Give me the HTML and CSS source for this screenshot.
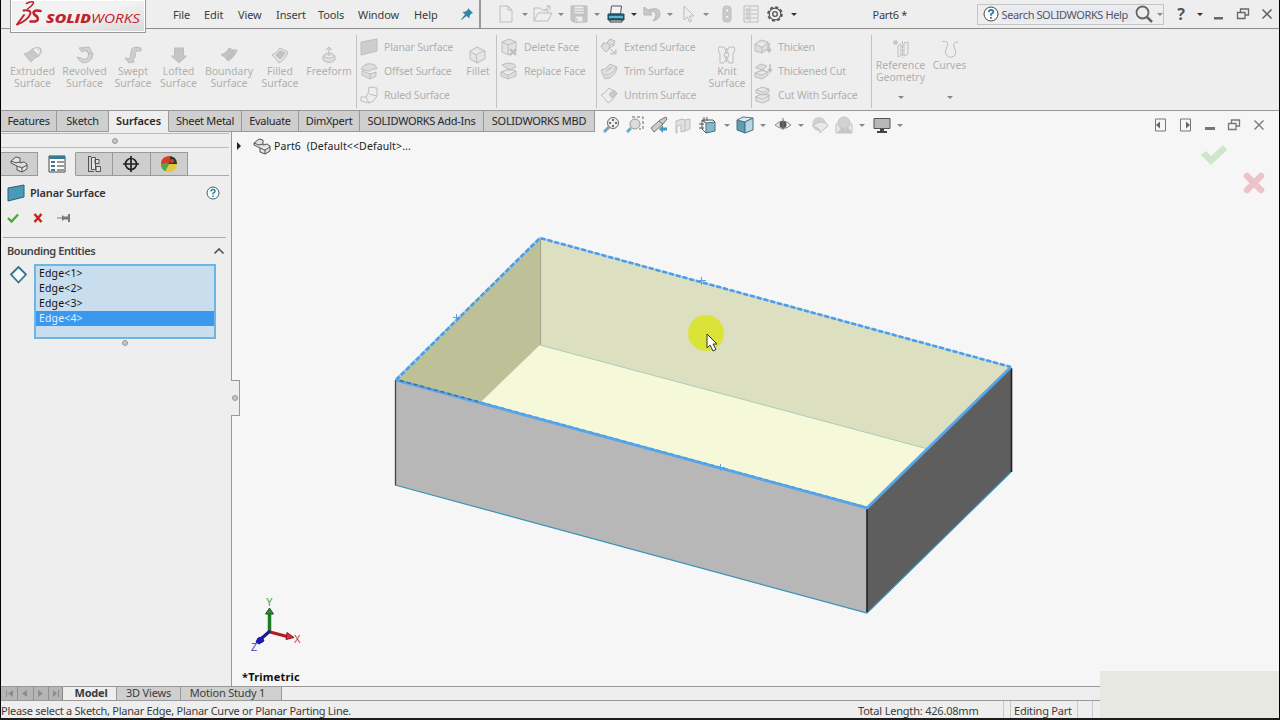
FILE: index.html
```html
<!doctype html>
<html lang="en">
    <head>
        <meta charset="UTF-8" />
        <title>SOLIDWORKS - Part6</title>
        <link rel="stylesheet" href="styles.css">
    </head>
    <body>
        <div class="app">
            <!-- Menu bar -->
            <div class="menubar">
                <div class="logo">
                    <svg width="131" height="30" viewBox="12 0 131 30">
                        <g fill="none" stroke="#c3212b" stroke-linecap="round" stroke-linejoin="round">
                            <path stroke-width="1.500" d="M26.500 3.500Q30 1.200 33 1.800 35 3.500 27.500 9" />
                            <path stroke-width="2" d="M23.500 10.500Q31 9.500 30.500 13.500 28 20.500 17 24.500L24 15" />
                            <path stroke-width="2.600" d="M40.500 11Q34.500 9.500 33.500 12.500 33.500 14.500 37 16.500 39.500 20.500 35 21.500L30.500 21.500" />
                        </g>
                        <text class="logo-bold" x="46" y="23" textLength="45" lengthAdjust="spacingAndGlyphs">SOLID</text>
                        <text class="logo-light" x="91" y="23" textLength="49" lengthAdjust="spacingAndGlyphs">WORKS</text>
                    </svg>
                </div>
                <div class="menus">
                    <span>File</span>
                    <span>Edit</span>
                    <span>View</span>
                    <span>Insert</span>
                    <span>Tools</span>
                    <span>Window</span>
                    <span>Help</span>
                    <svg class="pin" width="14" height="14" viewBox="0 0 14 14">
                        <path fill="#2d87a5" d="M8 1 L13 6 L11.500 6.500 L9.500 9 L9.500 11.500 L6.500 9 L1.500 13 L1 12.500 L5 7.500 L2.500 5 L5.500 4.500 L8 2.500Z" />
                    </svg>
                </div>
                <div class="quickbar">
                    <svg width="18" height="20" viewBox="0 0 18 20" class="faded"><path d="M3 2h8l4 4v12H3zM11 2v4h4" /></svg>
                    <i class="arrow mid"></i>
                    <svg width="20" height="20" viewBox="0 0 20 20" class="faded"><path d="M1 17V4h6l2 2h6v3M1 17l4-8h14l-4 8zM11 7l6-5m-4 0h4v4" /></svg>
                    <i class="arrow mid"></i>
                    <svg width="18" height="20" viewBox="0 0 18 20" class="faded"><path fill="#c5c5c5" d="M1 2h16v16H3l-2-2z" /><path fill="#eee" d="M4 2h10v8H4zM5 12h8v6H5z" /><path d="M5 5h8M5 7.500h8M7 14v4" /></svg>
                    <i class="arrow mid"></i>
                    <svg width="18" height="18" viewBox="0 0 18 18">
                        <path fill="#f3f3f3" stroke="#555" d="M4.500 1h10l-1 8h-10z" />
                        <path fill="#21677d" stroke="#164858" d="M1 9h16v6H1z" />
                        <path stroke="#71d0e4" stroke-width="1.500" d="M2 12h14" />
                        <path fill="#eee" stroke="#333" d="M3 15h12v2H3z" />
                    </svg>
                    <i class="arrow dark"></i>
                    <svg width="18" height="18" viewBox="0 0 18 18"><path fill="#c9c9c9" stroke="#b4b4b4" d="M1 2v8h8L6.500 7.500Q13 5 13 10q0 3-3 6 7-2 7-7Q17 1 5 5z" /></svg>
                    <i class="arrow mid"></i>
                    <svg width="16" height="20" viewBox="0 0 16 20" class="faded"><path d="M4 2v14l3.500-3 2 5 2-1-2-5H14z" /></svg>
                    <i class="arrow mid"></i>
                    <svg width="12" height="20" viewBox="0 0 12 20" class="faded"><rect x="2" y="2" width="8" height="16" rx="3" fill="#ccc" /><circle cx="6" cy="6.500" r="2" fill="#eee" /><circle cx="6" cy="13" r="2" fill="#eee" /></svg>
                    <svg width="16" height="18" viewBox="0 0 16 18" class="faded"><path d="M1 1h14v16H1zM3 4h3v2H3zM3 8h3v2H3zM3 12h3v2H3zM8 5h6M8 9h6M8 13h6M7 1v16" /></svg>
                    <svg width="18" height="18" viewBox="0 0 18 18" fill="none" stroke="#555">
                        <circle cx="9" cy="9" r="7" stroke-width="1.600" stroke-dasharray="3.100 2.400" />
                        <circle cx="9" cy="9" r="5.800" stroke-width="1.200" />
                        <circle cx="9" cy="9" r="2.300" stroke-width="1.300" />
                    </svg>
                    <i class="arrow dark"></i>
                </div>
                <div class="doc-title">Part6 *</div>
                <div class="search">
                    <svg width="16" height="16" viewBox="0 0 16 16">
                        <circle cx="8" cy="8" r="7" fill="#fff" stroke="#444" />
                        <path fill="none" stroke="#2383a6" stroke-width="1.800" d="M5.700 6.200Q6 4 8 4q2.500 0 2.300 2Q10 7.500 8 8v1.700M8 11v1.700" />
                    </svg>
                    <span>Search SOLIDWORKS Help</span>
                    <svg width="18" height="18" viewBox="0 0 18 18" fill="none" stroke="#666"><circle cx="7.500" cy="7.500" r="6" stroke-width="1.800" /><path stroke-width="2.500" d="M12 12l5 5" /></svg>
                    <i class="arrow mid"></i>
                </div>
                <div class="winbar">
                    <b>?</b>
                    <i class="arrow dark"></i>
                    <svg width="12" height="12" viewBox="0 0 12 12"><path fill="#666" d="M1 9h9v2.500H1z" /></svg>
                    <svg width="14" height="12" viewBox="0 0 14 12" fill="none" stroke="#666" stroke-width="1.300"><path d="M4.500 4V1h8v6H9M1.500 4.500H9v6H1.500z" /></svg>
                    <svg width="12" height="12" viewBox="0 0 12 12"><path stroke="#666" stroke-width="1.600" d="M1.500 1.500l9 9m0-9l-9 9" /></svg>
                </div>
            </div>

            <!-- Surfaces ribbon -->
            <div class="ribbon">
                <div class="group bigs">
                    <div class="big">
                        <svg width="20" height="18" viewBox="0 0 20 18" class="ghost"><path fill="#c9c9c9" d="M1 8q5-1 8-5l7 7q-4 1-8 6z" /><path d="M9 3l6-2 3 2-2 7M14 3h4v5" /></svg>
                        <span>Extruded<br>Surface</span>
                    </div>
                    <div class="big">
                        <svg width="18" height="18" viewBox="0 0 18 18" class="ghost"><path fill="#d2d2d2" d="M3 2l10-1 4 7q-1 8-9 9-5-1-7-6l4 1q4 3 7-1 2-4-1-7L6 6z" /><path d="M7 2l6 6 4-1" /></svg>
                        <span>Revolved<br>Surface</span>
                    </div>
                    <div class="big">
                        <svg width="18" height="18" viewBox="0 0 18 18" class="ghost"><path fill="#cecece" d="M17 2q-10-3-10 4 0 5-2 7L1 12l4 5 5-1-1-2q4-4 2-7 1-3 6-2z" /></svg>
                        <span>Swept<br>Surface</span>
                    </div>
                    <div class="big">
                        <svg width="18" height="18" viewBox="0 0 18 18" class="ghost"><path fill="#c5c5c5" d="M4.500 2h9v8h3l-7.500 7-7.500-7h3z" /></svg>
                        <span>Lofted<br>Surface</span>
                    </div>
                    <div class="big">
                        <svg width="18" height="18" viewBox="0 0 18 18" class="ghost"><path fill="#c3c3c3" d="M1 9q6-2 8-7 4 3 8 2-3 8-9 11-3-5-7-6z" /><path d="M5 7l7 5M9 4l5 4M7 13l6-9" /></svg>
                        <span>Boundary<br>Surface</span>
                    </div>
                    <div class="big">
                        <svg width="18" height="18" viewBox="0 0 18 18" class="ghost"><path fill="#e2e2e2" d="M1 9q5-2 8-7l8 4q-3 8-9 11-3-5-7-8z" /><path fill="#c2c2c2" d="M5 9l4-4 5 2-5 6z" /></svg>
                        <span>Filled<br>Surface</span>
                    </div>
                    <div class="big">
                        <svg width="18" height="18" viewBox="0 0 18 18" class="ghost"><path fill="#dedede" d="M3 10q2-3 6-3t6 3v4q-6 5-12 0zM3 10q6 4 12 0M9 10V1M6 4l3-3 3 3" /></svg>
                        <span>Freeform</span>
                    </div>
                </div>

                <div class="group offsets">
                    <div class="rows">
                        <div><svg width="18" height="18" viewBox="0 0 18 18" class="ghost"><path fill="#cecec9" d="M1 4l16-3v12L1 17z" /></svg>Planar Surface</div>
                        <div><svg width="18" height="18" viewBox="0 0 18 18" class="ghost"><path fill="#ddd" d="M1 7q5-8 14-4l2 4q-4-1-7 2-5 0-9-2zM2 9v4l8 4 6-3v-4l-6 2zM10 12v5" /></svg>Offset Surface</div>
                        <div><svg width="18" height="18" viewBox="0 0 18 18" class="ghost"><path d="M9 1l8 1v8q-3 6-8 7l-8-2v-4h5q3-3 3-10zM9 8l8 2M6 11l3 6" /></svg>Ruled Surface</div>
                    </div>
                    <div class="big">
                        <svg width="18" height="18" viewBox="0 0 18 18" class="ghost"><path fill="#e5e5e5" d="M1 5l7-4 8 4v8l-8 4-7-4zM1 5l6 4q1-2 9-4M7 9l1 8" /></svg>
                        <span>Fillet</span>
                    </div>
                </div>

                <div class="group faces">
                    <div class="rows">
                        <div><svg width="18" height="18" viewBox="0 0 18 18" class="ghost"><path fill="#e3e3e3" d="M2 4l7-3 7 3v10l-7 3-7-3zM2 4l6 3v10M8 7l8-3" /><path stroke-width="2" d="M10 11l6 6m0-6l-6 6" /></svg>Delete Face</div>
                        <div><svg width="18" height="18" viewBox="0 0 18 18" class="ghost"><path fill="#ddd" d="M2 3l5-2 7 1 2 3-7 3zM1 10l8-3 7 2v5l-8 3-7-3zM1 10l7 3 8-4M8 13v4" /></svg>Replace Face</div>
                    </div>
                </div>

                <div class="group trims">
                    <div class="rows">
                        <div><svg width="18" height="18" viewBox="0 0 18 18" class="ghost"><path fill="#dedede" d="M1 9q1-4 6-4l3-4 5 2-1 3q-5 0-5 5l-3 3zM9 11q2-3 6-4M9 10l6 5M16 11v5h-6" /><path d="M1 9l3-5M10 1L7 5l4 3" /></svg>Extend Surface</div>
                        <div><svg width="18" height="18" viewBox="0 0 18 18" class="ghost"><path fill="#ddd" d="M1 8q6-1 9-6l7 3q-1 8-8 11l-4 1-2-4zM5 13q8-1 11-8M6 9l6-4" /></svg>Trim Surface</div>
                        <div><svg width="18" height="18" viewBox="0 0 18 18" class="ghost"><path d="M1 9q5-2 8-7l8 5q-3 7-9 10-3-5-7-8z" /><path fill="#c9c9c9" d="M9 8l5-4 3 4-5 4z" /></svg>Untrim Surface</div>
                    </div>
                    <div class="big">
                        <svg width="18" height="18" viewBox="0 0 18 18" class="ghost"><path d="M1 1h5l2 4-2 4 2 4-2 4H2V8L0 4zM16 1h-5L9 5l2 4-2 4 2 4h4V8l2-4z" /><path stroke-dasharray="2 2" d="M8.500 2v15" /></svg>
                        <span>Knit<br>Surface</span>
                    </div>
                </div>

                <div class="group thick">
                    <div class="rows">
                        <div><svg width="18" height="18" viewBox="0 0 18 18" class="ghost"><path fill="#ddd" d="M1 6l6-4 7 2v7l-6 4-7-2zM1 6l7 3 6-5M8 9v6" /><path stroke-width="1.500" d="M15 5v9m-2-3l2 3 2-3" /></svg>Thicken</div>
                        <div><svg width="18" height="18" viewBox="0 0 18 18" class="ghost"><path fill="#ddd" d="M2 5l5-3 6 2-4 4-7-2zM1 11l7-3 6 2v3l-6 4-7-2zM1 11l7 2 6-3" /><path stroke-width="1.500" d="M16 2v8m-2-3l2 3 2-3" /></svg>Thickened Cut</div>
                        <div><svg width="18" height="18" viewBox="0 0 18 18" class="ghost"><path fill="#e1e1e1" d="M2 4l6-3 7 2v3L9 9 2 7zM2 4l7 2 6-3M1 11l7-3 8 1-7 4zM2 11v4l7 2 6-3v-4" /></svg>Cut With Surface</div>
                    </div>
                </div>

                <div class="group refs">
                    <div class="big">
                        <svg width="18" height="18" viewBox="0 0 18 18" class="ghost"><path fill="#ccc" d="M2 1h3v3H2z" /><path d="M6 6l3-2v11l-3 2zM12 3l4-1v12l-4 2z" /><path stroke-dasharray="3 1" d="M10.500 1v17" /></svg>
                        <span>Reference<br>Geometry</span>
                        <i class="arrow mid"></i>
                    </div>
                    <div class="big">
                        <svg width="18" height="18" viewBox="0 0 18 18" class="ghost"><path d="M1.500 1.500q6-1 5 4-5 9 2 11.500h2q6-1 3.500-8-4-7 3-7" /></svg>
                        <span>Curves</span>
                        <i class="arrow mid"></i>
                    </div>
                </div>
            </div>

            <!-- Command tabs and heads-up toolbar -->
            <div class="tabrow">
                <div class="tabs">
                    <div class="tab">Features</div>
                    <div class="tab">Sketch</div>
                    <div class="tab active">Surfaces</div>
                    <div class="tab">Sheet Metal</div>
                    <div class="tab">Evaluate</div>
                    <div class="tab">DimXpert</div>
                    <div class="tab">SOLIDWORKS Add-Ins</div>
                    <div class="tab">SOLIDWORKS MBD</div>
                </div>
                <div class="hud">
                    <svg width="18" height="18" viewBox="0 0 18 18"><path stroke="#6caac0" stroke-width="3" d="M2 16l5-5" /><circle cx="11" cy="7" r="5.500" fill="#eee" stroke="#666" /><path stroke="#444" stroke-width="1.500" d="M11 3v2M11 9v2M7 7h2M13 7h2" /></svg>
                    <svg width="18" height="18" viewBox="0 0 18 18"><path stroke="#6caac0" stroke-width="3" d="M1 16l4-4" /><circle cx="9" cy="8" r="5" fill="#ddd" stroke="#999" /><path fill="none" stroke="#666" stroke-dasharray="3 2" d="M6 1h11v12h-4" /></svg>
                    <svg width="18" height="18" viewBox="0 0 18 18"><path fill="#ccc" stroke="#777" d="M1 12l9-8 6-3 1 2-4 5-9 8zM9 5l4 3" /><path fill="#4199bb" d="M9 13l4-4v2.500h4v3h-4V17z" /></svg>
                    <svg width="18" height="18" viewBox="0 0 18 18" class="ghost"><path fill="#e1e1e1" d="M2 5l6-2 3 1v11l-4 1v-7l-4 1v7H2zM11 4l5-1v10l-5 2" /></svg>
                    <svg width="18" height="18" viewBox="0 0 18 18"><path fill="#86b9ce" stroke="#48717f" d="M7 7l9-1v9l-9 2z" /><path fill="none" stroke="#555" d="M7 7L3 4h11l2 2M3 4v9l4 4M5 1v5M8 1v4M0 8h5M0 12h5" /></svg>
                    <i class="arrow mid"></i>
                    <svg width="18" height="18" viewBox="0 0 18 18"><path fill="#5f9db6" stroke="#48717f" d="M1 4l8 2v11l-8-3z" /><path fill="#d9ebef" stroke="#557783" d="M1 4l6-3 10 1-8 4z" /><path fill="#b5d6e2" stroke="#48717f" d="M9 6l8-4v12l-8 3z" /></svg>
                    <i class="arrow mid"></i>
                    <svg width="18" height="18" viewBox="0 0 18 18"><path fill="#eee" stroke="#888" d="M1 9q8-8 16 0-8 7-16 0z" /><circle cx="9" cy="8.500" r="3.500" fill="#555" /><path stroke="#777" d="M9 2v12" /></svg>
                    <i class="arrow mid"></i>
                    <svg width="18" height="18" viewBox="0 0 18 18"><circle cx="8" cy="8" r="7" fill="#d2d2d2" /><path fill="#e9e9e9" stroke="#c0c0c0" d="M2 10q6-6 13-3l2 3-5 4-3 3-1-4z" /></svg>
                    <svg width="18" height="18" viewBox="0 0 18 18"><path fill="#e8e8e8" stroke="#c2c2c2" d="M1 8h16v9H1z" /><circle cx="9" cy="7" r="6" fill="#d2d2d2" stroke="#c2c2c2" /><path fill="#c5c5c5" d="M2 17l5-6 3 3 3-3 4 6z" /></svg>
                    <i class="arrow mid"></i>
                    <svg width="18" height="18" viewBox="0 0 18 18"><path fill="#b4b8ba" stroke="#555" d="M1 2.500h16v10H1z" /><path fill="#444" d="M7 13h4v2h3v2H4v-2h3z" /></svg>
                    <i class="arrow mid"></i>
                </div>
                <div class="viewctl">
                    <svg width="14" height="14" viewBox="0 0 14 14"><path fill="none" stroke="#777" d="M1.500 1h10v12h-10z" /><path fill="#666" d="M2 7l4-3.500v7z" /></svg>
                    <svg width="14" height="14" viewBox="0 0 14 14"><path fill="none" stroke="#777" d="M1.500 1h10v12h-10z" /><path fill="#666" d="M11 7L7 3.500v7z" /></svg>
                    <svg width="12" height="12" viewBox="0 0 12 12"><path fill="#777" d="M1 8h10v3H1z" /></svg>
                    <svg width="14" height="12" viewBox="0 0 14 12" fill="none" stroke="#777" stroke-width="1.300"><path d="M4.500 4V1h8v6H9M1.500 4.500H9v6H1.500z" /></svg>
                    <svg width="12" height="12" viewBox="0 0 12 12"><path stroke="#777" stroke-width="1.300" d="M1.500 1.500l9 9m0-9l-9 9" /></svg>
                </div>
            </div>

            <div class="main">
                <!-- Property manager -->
                <div class="panel">
                    <div class="grip"><i class="dot"></i></div>
                    <div class="panel-tabs">
                        <div><svg width="18" height="18" viewBox="0 0 18 18" class="line"><path fill="#e5e5e5" d="M1 6l5-4 4 1v5l4-1 3 2v5l-5 3-5-2v-4l-6-3zM1 6l5 2 4-1M7 11l5 2 5-3M12 13v4" /></svg></div>
                        <div class="active"><svg width="18" height="18" viewBox="0 0 18 18"><path fill="#fff" stroke="#444" d="M1 1h16v16H1z" /><path fill="#367b96" d="M1 1h16v3H1zM3 6h4v2H3zM3 10h4v2H3zM3 14h4v2H3z" /><path stroke="#333" d="M9 7h7M9 11h7M9 15h7" /></svg></div>
                        <div><svg width="18" height="18" viewBox="0 0 18 18" class="line"><path fill="#e5e5e5" d="M3.500 1v15.500M3 1.500h3M3 16.500h6M6.500 2.500h4v12h-4zM10 4.500h4v4h-4zM11 11.500h4.500v5H11z" /></svg></div>
                        <div><svg width="18" height="18" viewBox="0 0 18 18" fill="none" stroke="#222" stroke-width="1.700"><circle cx="9" cy="9" r="5.500" /><path d="M9 1v16M1 9h16" /></svg></div>
                        <div><svg width="18" height="18" viewBox="0 0 18 18"><circle cx="9" cy="9" r="8" fill="#e2c83a" /><path fill="#d83a2c" d="M9 9L1 8Q2 1 10 1z" /><path fill="#333" d="M9 9l1-8q7 1 7 8z" /><path fill="#3171b7" d="M9 9L1 8q0 5 4 8z" /><path fill="#50a943" d="M9 9H1q0 5 4 7z" /><circle cx="12" cy="6" r="2" fill="#c74537" /></svg></div>
                    </div>
                    <div class="panel-title">
                        <svg width="18" height="18" viewBox="0 0 18 18"><path fill="#4b9ab7" stroke="#286176" d="M1 4l16-3v12L1 17z" /></svg>
                        <span>Planar Surface</span>
                        <svg width="14" height="14" viewBox="0 0 14 14"><circle cx="7" cy="7" r="6" fill="#fff" stroke="#4a5a60" /><path fill="none" stroke="#2383a6" stroke-width="1.500" d="M5 5.500Q5 3.500 7 3.500t2 2Q9 6.500 7 7.200v1.300M7 9.500V11" /></svg>
                    </div>
                    <div class="actions">
                        <svg width="12" height="12" viewBox="0 0 12 12"><path fill="none" stroke="#45ad2a" stroke-width="2.300" d="M1 6l3.500 3.500L11 2.500" /></svg>
                        <svg width="10" height="10" viewBox="0 0 10 10"><path stroke="#cc2018" stroke-width="2.500" d="M1.500 1l7 8m0-8l-7 8" /></svg>
                        <svg width="14" height="10" viewBox="0 0 14 10"><path fill="#777" d="M0 4.500h5V2l2 1.500h4V1h2v8h-2V6.500H7L5 8V5.500H0z" /></svg>
                    </div>
                    <div class="section">
                        <div class="section-header">
                            <span>Bounding Entities</span>
                            <svg width="12" height="8" viewBox="0 0 12 8"><path fill="none" stroke="#555" stroke-width="1.700" d="M1.500 6.500L6 2l4.500 4.500" /></svg>
                        </div>
                        <div class="selection">
                            <svg width="18" height="18" viewBox="0 0 18 18"><path fill="#f6fbfd" stroke="#34728e" stroke-width="1.800" stroke-linejoin="round" d="M9.500 1L17 8.500l-7.500 8L2 8.500z" /></svg>
                            <div class="listbox">
                                <div>Edge&lt;1&gt;</div>
                                <div>Edge&lt;2&gt;</div>
                                <div>Edge&lt;3&gt;</div>
                                <div class="selected">Edge&lt;4&gt;</div>
                            </div>
                        </div>
                        <div class="resize"><i class="dot"></i></div>
                    </div>
                    <div class="flyout"><i class="dot"></i></div>
                </div>

                <!-- Graphics area -->
                <div class="viewport">
                    <div class="tree">
                        <i class="expand"></i>
                        <svg width="18" height="18" viewBox="0 0 18 18" class="line"><path fill="#e0e0e0" d="M1 6l5-4 4 1v5l4-1 3 2v5l-5 3-5-2v-4l-6-3zM1 6l5 2 4-1M7 11l5 2 5-3M12 13v4" /></svg>
                        <span>Part6  (Default&lt;&lt;Default&gt;...</span>
                    </div>
                    <svg class="scene" width="1047" height="555" viewBox="232 131 1047 555">
                        <polygon points="540,238 396,380 481,402 540,345" fill="#bec097" />
                        <polygon points="540,238 1011,367 928,449 540,345" fill="#dde0c0" />
                        <polygon points="540,345 928,449 867,508 481,402" fill="#f5f8d9" />
                        <polygon points="395,380 867,508 867,613 395,485" fill="#b7b7b7" />
                        <polygon points="867,508 1011,367 1011,472 867,613" fill="#5d5e5d" />
                        <path fill="none" stroke="#9da28a" d="M540.500 239v106" />
                        <path fill="none" stroke="#a6cbbb" d="M540 345l388 104" />
                        <path fill="none" stroke="#3593b5" stroke-width="1.200" d="M395 485l472 128 144-141" />
                        <path fill="none" stroke="#444" stroke-width="1.300" d="M395.500 380v105" />
                        <path fill="none" stroke="#222" stroke-width="1.600" d="M867 509v103M1011.500 368v104" />
                        <!-- selected edges -->
                        <path fill="none" stroke="#58a5e9" stroke-width="1.200" d="M396 379L540 237.500" />
                        <path fill="none" stroke="#a9cfec" stroke-width="1.800" d="M396 380L540 238l471 129" />
                        <path fill="none" stroke="#4b9ee6" stroke-width="2.600" stroke-dasharray="5 2" d="M396 380L540 238l471 129" />
                        <path fill="none" stroke="#58a5e9" stroke-width="2.900" d="M396 380l471 128 144-141" />
                        <path fill="none" stroke="#43697d" stroke-width="1.300" stroke-dasharray="4 3" d="M400 380.500l80 21.500" />
                        <path fill="none" stroke="#4a9ade" stroke-width="1" stroke-dasharray="4 3" d="M481 402l386 105" />
                        <path stroke="#56a3e1" d="M453 317.500h8M456.500 314v8M698 280.500h8M701.500 277v8M717 467.500h8M720.500 464v7" />
                        <!-- pointer -->
                        <circle cx="706" cy="333" r="18" fill="#dce338" />
                        <path fill="#fff" stroke="#333" d="M707 334v14l3-3 3 6 3-1.500-3-5.500h4z" />
                        <!-- triad -->
                        <path stroke="#207a24" stroke-width="3.500" d="M269.500 631v-18" />
                        <path fill="#2c8c31" stroke="#175c1c" d="M265.500 614l4-6 4 6z" />
                        <path stroke="#b71823" stroke-width="3" d="M270 632l19 5" />
                        <path fill="#d3313a" stroke="#8f1720" d="M287 632.500l7 5-8 2z" />
                        <path stroke="#171a90" stroke-width="3" d="M270 631l-8 7" />
                        <path fill="#2116bf" stroke="#1b168d" d="M258 638l4-1 2 4-5 3-3-2z" />
                        <text class="axis" x="266" y="606" fill="#42a344">Y</text>
                        <text class="axis" x="294" y="643" fill="#cf3546">X</text>
                        <text class="axis" x="251" y="651" fill="#403fc0">Z</text>
                    </svg>
                    <div class="confirm">
                        <svg width="28" height="22" viewBox="0 0 28 22"><path fill="#cfe6cc" d="M1 11l5-4 5 5L23 1l4 5-16 15z" /></svg>
                        <svg width="24" height="24" viewBox="0 0 24 24"><path stroke="#ecc3c7" stroke-width="6.500" stroke-linecap="round" d="M5 5l14 14m0-14L5 19" /></svg>
                    </div>
                    <div class="view-name">*Trimetric</div>
                </div>
            </div>

            <!-- Bottom tabs -->
            <div class="sheets">
                <div class="nav">
                    <svg width="61" height="13" viewBox="0 0 61 13"><path fill="none" stroke="#909090" d="M15.500 0v13M31.500 0v13M46.500 0v13M4.500 3v7" /><path fill="#8c8c8c" d="M11 3v7L6 6.500zM25 3v7l-5-3.500zM36 3v7l5-3.500zM51 3v7l4-3.500zM56 3h1v7h-1z" /></svg>
                </div>
                <div class="sheet active">Model</div>
                <div class="sheet">3D Views</div>
                <div class="sheet">Motion Study 1</div>
            </div>

            <!-- Status bar -->
            <div class="status">
                <div class="hint">Please select a Sketch, Planar Edge, Planar Curve or Planar Parting Line.</div>
                <div class="length">Total Length: 426.08mm</div>
                <div class="cell"></div>
                <div class="editing">Editing Part</div>
                <div class="cell last"></div>
            </div>
            <div class="patch"></div>
        </div>
    </body>
</html>
```
FILE: styles.css
```css
* {
    box-sizing: border-box;
}

body {
    margin: 0;
    background-color: #1b1b1b;
    color: #3c3c3c;
    font-family: "Noto Sans", "Open Sans", sans-serif;
    font-size: 11px;
    letter-spacing: -0.3px;
    overflow: hidden;
}

svg {
    display: block;
    flex-shrink: 0;
}

.app {
    position: relative;
    display: flex;
    flex-direction: column;
    width: 1280px;
    height: 718px;
    border-left: 1px solid #000;
    border-right: 1px solid #000;
    background-color: #eeeeee;
    white-space: nowrap;
}

.arrow {
    width: 0;
    height: 0;
    border: 3px solid transparent;
    border-bottom: 0;
    border-top-color: #333;
}

.arrow.mid {
    border-top-color: #888;
}

.dot {
    width: 6px;
    height: 6px;
    border: 1px solid #999;
    border-radius: 50%;
    background-color: #c5c5c5;
}

/* line icons */
.faded {
    fill: none;
    stroke: #bdbdbd;
}

.ghost {
    fill: none;
    stroke: #bdbdbd;
}

.line {
    fill: none;
    stroke: #555;
}

/* Menu bar */
.menubar {
    display: flex;
    align-items: center;
    height: 29px;
    border-bottom: 1px solid #8e8e8e;
}

.logo {
    position: absolute;
    left: 9px;
    top: 0;
    z-index: 1;
    width: 136px;
    height: 33px;
    padding: 0 1px;
    border: 1px solid #999;
    border-top: 0;
    background: linear-gradient(to bottom right, #f2f2f2 50%, #d8d8d8);
    box-shadow: inset 0 0 0 1px #fff;
}

.logo text {
    fill: #c3212b;
    font-family: "Open Sans", sans-serif;
    font-size: 13px;
    font-style: italic;
    letter-spacing: 0;
}

.logo .logo-bold {
    font-weight: 800;
}

.menus {
    display: grid;
    grid-template-columns: 31px 34px 38px 42px 40px 56px 46px 14px;
    align-items: center;
    width: 311px;
    height: 28px;
    margin-left: 172px;
    border-right: 2px solid #999;
    letter-spacing: -0.100px;
}

.quickbar {
    display: grid;
    grid-template-columns: repeat(12, 18.200px) 23px 24px 24px 14px;
    place-items: center;
    margin-left: 16px;
}

.doc-title {
    width: 105px;
    margin-left: 72px;
}

.search {
    display: flex;
    align-items: center;
    width: 189px;
    height: 21px;
    padding-left: 5px;
    border: 1px solid #c2c6c8;
}

.search span {
    width: 134px;
    margin-left: 2px;
    padding-left: 1px;
    background-color: #e9e9f1;
    color: #55555f;
    letter-spacing: -0.400px;
}

.search .arrow {
    margin-left: 4px;
}

.winbar {
    display: grid;
    grid-template-columns: 24px 13px 25px 24px 24px;
    place-items: center;
    margin-left: 5px;
}

.winbar b {
    color: #555;
    font-size: 16px;
    line-height: 20px;
}

/* Ribbon */
.ribbon {
    display: flex;
    height: 82px;
    border-bottom: 1px solid #999;
    color: #b0b0b0;
    font-size: 10.500px;
    letter-spacing: 0;
}

.group {
    position: relative;
    display: flex;
    height: 73px;
    margin-top: 6px;
    border-right: 1px solid #c2c2c2;
}

.big {
    display: flex;
    flex-direction: column;
    align-items: center;
    padding-top: 11px;
    line-height: 12px;
    text-align: center;
}

.big span {
    margin-top: 1px;
}

.bigs {
    display: grid;
    grid-template-columns: 53px 51px 46px 45px 56px 46px 52px;
    width: 356px;
    padding-left: 5px;
}

.rows {
    display: flex;
    flex-direction: column;
    letter-spacing: -0.170px;
}

.rows div {
    display: flex;
    align-items: center;
    gap: 6px;
    height: 24.200px;
}

.offsets {
    width: 140px;
    padding-left: 3px;
}

.offsets .rows {
    width: 101px;
}

.offsets .big {
    width: 34px;
}

.faces {
    width: 100px;
    padding-left: 3px;
}

.trims {
    width: 155px;
    padding-left: 3px;
}

.trims .rows {
    width: 104px;
}

.trims .big {
    width: 46px;
}

.thick {
    width: 120px;
    padding-left: 2px;
}

.refs {
    border: 0;
    padding-left: 4px;
}

.refs .big {
    width: 49px;
    padding-top: 5px;
}

.refs span {
    height: 37px;
}

/* Command tabs */
.tabrow {
    position: relative;
    z-index: 1;
    display: flex;
    height: 20px;
    background-color: #f6f6f6;
}

.tabs {
    display: grid;
    grid-template-columns: 56px 52px 60px 73px 57px 61px 124px 111px;
    height: 20px;
}

.tab {
    border-right: 1px solid #999;
    border-bottom: 1px solid #999;
    background-color: #cfcfcf;
    color: #282828;
    line-height: 20px;
    text-align: center;
}

.tab.active {
    border-bottom-color: #eeeeee;
    background-color: #eeeeee;
    font-weight: 600;
    letter-spacing: -0.100px;
}

.hud {
    display: grid;
    grid-template-columns: 24px 24px 24px 24px 25px 13px 24px 12px 28px 7px 32px 16px 20px 20px 16px;
    place-items: center;
    height: 28px;
    margin-left: 4px;
}

.viewctl {
    display: grid;
    grid-template-columns: repeat(5, 24.400px);
    place-items: center;
    height: 28px;
    margin-left: 241px;
}

/* Property manager */
.main {
    display: flex;
    height: 555px;
}

.panel {
    position: relative;
    width: 231px;
    border-right: 1px solid #999;
}

.grip {
    display: flex;
    align-items: center;
    justify-content: center;
    width: 228px;
    height: 15px;
    margin-top: 2px;
    border-top: 1px solid #bbb;
    border-bottom: 1px solid #bbb;
}

.panel-tabs {
    display: flex;
    width: 228px;
    height: 24px;
    margin-top: 4px;
    border-bottom: 1px solid #aaa;
}

.panel-tabs div {
    display: flex;
    align-items: center;
    justify-content: center;
    width: 37.400px;
    height: 24px;
    border: 1px solid #999;
    border-left: 0;
    background-color: #cecece;
}

.panel-tabs .active {
    border-top-color: #eee;
    border-bottom-color: #eee;
    background-color: #eee;
}

.panel-title {
    display: flex;
    align-items: center;
    height: 33px;
    padding-left: 6px;
    color: #333;
    font-weight: 600;
    letter-spacing: -0.150px;
}

.panel-title span {
    width: 176px;
    margin-left: 5px;
}

.actions {
    display: flex;
    align-items: center;
    gap: 14px;
    width: 223px;
    height: 29px;
    padding: 0 0 11px 6px;
    margin-left: 2px;
    border-bottom: 1px solid #aaa;
}

.actions svg:first-child {
    margin-left: -2px;
}

.section-header {
    display: flex;
    align-items: center;
    justify-content: space-between;
    height: 26px;
    padding: 0 6px 1px;
    color: #444;
    font-weight: 600;
    letter-spacing: -0.400px;
}

.selection {
    display: flex;
    padding-left: 8px;
}

.selection svg {
    margin-top: 2px;
}

.listbox {
    width: 182px;
    height: 75px;
    margin-left: 7px;
    border: 2px solid #70b5e2;
    background-color: #c8deee;
    color: #111;
    font-size: 10.500px;
    letter-spacing: 0.150px;
    line-height: 15px;
}

.listbox div {
    padding-left: 3px;
}

.listbox .selected {
    background-color: #3a98ee;
    color: #e2f1ff;
}

.resize {
    display: flex;
    justify-content: center;
    padding: 1px 0 0 18px;
}

.flyout {
    position: absolute;
    left: 230px;
    top: 249px;
    z-index: 1;
    display: flex;
    align-items: center;
    width: 9px;
    height: 36px;
    padding-left: 1px;
    border: 1px solid #999;
    border-left: 0;
    background-color: #eee;
}

/* Graphics area */
.viewport {
    position: relative;
    flex: 1;
    background-color: #f6f6f6;
}

.scene {
    position: absolute;
    left: 0;
    top: 0;
}

.axis {
    font-family: "Liberation Sans", sans-serif;
    font-size: 10px;
}

.tree {
    display: flex;
    align-items: center;
    height: 28px;
    padding: 2px 0 0 5px;
    color: #222;
    font-size: 10.500px;
    letter-spacing: 0.120px;
    white-space: pre;
}

.tree svg {
    margin: 0 3px 0 12px;
}

.expand {
    width: 0;
    height: 0;
    border: 4px solid transparent;
    border-left-color: #222;
    border-right: 0;
}

.confirm {
    position: absolute;
    right: 13px;
    top: 13px;
    display: flex;
    flex-direction: column;
    align-items: flex-end;
    gap: 5px;
}

.confirm svg:first-child {
    margin-right: 38px;
}

.view-name {
    position: absolute;
    left: 10px;
    bottom: 2px;
    color: #111;
    font-weight: 700;
    letter-spacing: 0.200px;
}

/* Bottom tabs and status bar */
.sheets {
    display: flex;
    height: 15px;
    border-top: 1px solid #999;
    border-bottom: 1px solid #999;
    line-height: 12px;
    text-align: center;
}

.nav {
    width: 62px;
    padding-left: 1px;
    border-right: 1px solid #888;
    background-color: #b5b5b5;
}

.sheet {
    width: 64px;
    border-right: 1px solid #999;
    background-color: #cfcfcf;
    letter-spacing: -0.200px;
}

.sheet.active {
    width: 54px;
    padding-left: 3px;
    background-color: #eee;
    font-weight: 700;
}

.sheet:last-child {
    width: 101px;
    padding-right: 7px;
}

.status {
    display: flex;
    height: 17px;
    line-height: 19px;
    letter-spacing: -0.200px;
}

.hint {
    width: 857px;
    letter-spacing: -0.270px;
}

.length {
    width: 146px;
    border-right: 1px solid #c8c8c8;
}

.cell {
    width: 7px;
    border-right: 1px solid #c8c8c8;
}

.editing {
    width: 67px;
    padding-left: 3px;
    border-right: 1px solid #c8c8c8;
}

.cell.last {
    width: 15px;
}

.patch {
    position: absolute;
    right: 0;
    bottom: 0;
    width: 179px;
    height: 47px;
    background-color: #e8e8e3;
}
```
